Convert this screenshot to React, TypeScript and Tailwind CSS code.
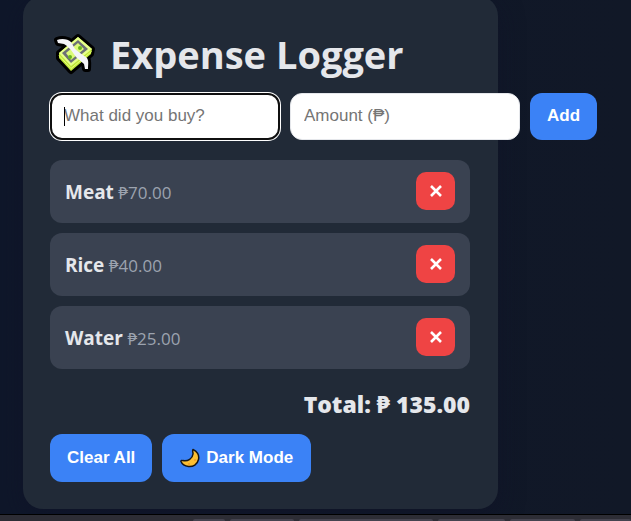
import { useState } from "react";

type Expense = { id: number; name: string; amount: number };

const initialExpenses: Expense[] = [
  { id: 1, name: "Meat", amount: 70 },
  { id: 2, name: "Rice", amount: 40 },
  { id: 3, name: "Water", amount: 25 },
];

function MoneyIcon() {
  const note = "M28 8 42 20 41 25 21 42 9 29 9 24Z";
  const wings =
    "M7 11C12 9 18 10 21 13L25 20 30 24 37 29C39 32 38 36 38 40L35 40 34 35 26 28 21 21 17 17 14 15 8 14Z";
  return (
    <svg aria-hidden="true" className="h-[50px] w-[50px] shrink-0" viewBox="0 0 50 50">
      <g fill="#000" stroke="#000" strokeWidth="6" strokeLinejoin="round">
        <path d={note} />
        <path d={wings} />
      </g>
      <path d={note} fill="#bfe83a" />
      <path d="M28 8 42 20 21 37 9 24Z" fill="#e6ff8a" />
      <path d="M9 26.5 21 39.5 41.5 22.5" fill="none" stroke="#e9ff7d" strokeWidth="1" />
      <path d="M28 11 38 20 21 34 12 24Z" fill="#6d7076" />
      <path d="M28 14 34 20 21 31 16 24Z" fill="#dcfa78" />
      <circle cx="30" cy="19" r="2" fill="#6ab51d" />
      <circle cx="20" cy="28" r="2" fill="#6ab51d" />
      <path d={wings} fill="#f4f4f7" />
    </svg>
  );
}

function MoonIcon() {
  return (
    <svg aria-hidden="true" className="h-5 w-5 shrink-0" viewBox="0 0 20 20">
      <path
        d="M13 1.5C17 3 19.5 7 18.5 11.5 17.5 16.5 13 19 8.5 18.5 5 18 2 16 1 13.5 .8 12.5 2 12.300 3 12.6 8 13.5 12.5 10.5 13 6 13.2 4.500 12 2.5 13 1.5Z"
        fill="#fcbf32"
        stroke="#161616"
        strokeWidth="1.5"
        strokeLinejoin="round"
      />
      <circle cx="9" cy="16" r="1" fill="#f09a28" />
      <circle cx="15" cy="12" r="1" fill="#f09a28" />
    </svg>
  );
}

const primaryButton =
  "shrink-0 rounded-xl bg-[#3b82f6] font-['Liberation_Sans',Arial,sans-serif] text-[17px] font-bold text-white";

export default function App() {
  const [expenses, setExpenses] = useState(initialExpenses);
  const [name, setName] = useState("");
  const [amount, setAmount] = useState("");
  const total = expenses.reduce((sum, e) => sum + e.amount, 0);

  const add = () => {
    const value = Number(amount);
    if (!name || !value) return;
    setExpenses([...expenses, { id: Date.now(), name, amount: value }]);
    setName("");
    setAmount("");
  };

  return (
    <div className="flex min-h-screen flex-col overflow-hidden bg-linear-to-r from-[#0f172a] to-[#111827] font-['Open_Sans','Noto_Sans',sans-serif] text-[#e5e7eb]">
      <main className="-mt-1 mr-6 ml-[23px] max-w-[475px] rounded-[20px] bg-[#212a37] pt-8 pr-7 pb-[27px] pl-[27px] shadow-[0_8px_24px_rgba(15,18,40,0.6)]">
        <h1 className="flex h-[52px] items-center gap-[10px] text-[38px] font-bold whitespace-nowrap">
          <MoneyIcon />
          Expense Logger
        </h1>

        <div className="mt-[13px] flex gap-[10px]">
          <div className="relative w-[230px] shrink-0">
            <input
              aria-label="What did you buy?"
              placeholder="What did you buy?"
              value={name}
              onChange={(e) => setName(e.target.value)}
              className="peer h-[47px] w-full rounded-xl border-2 border-[#101010] bg-white px-3 pb-[2px] font-['Liberation_Sans',Arial,sans-serif] text-[17px] text-black ring-1 ring-white outline-none placeholder:text-[#757575]"
            />
            <span className="pointer-events-none absolute top-[14px] left-[14px] h-[19px] w-px bg-black peer-focus:hidden" />
          </div>
          <input
            aria-label="Amount (₱)"
            placeholder="Amount (₱)"
            value={amount}
            onChange={(e) => setAmount(e.target.value)}
            className="h-[47px] w-[230px] shrink-0 rounded-xl border border-[#e5e7eb] bg-white px-[13px] pb-[2px] font-['Liberation_Sans',Arial,sans-serif] text-[17px] text-black placeholder:text-[#757575]"
          />
          <button onClick={add} className={`${primaryButton} h-[47px] px-[17px] pb-[2px]`}>
            Add
          </button>
        </div>

        <ul className="mt-5 flex flex-col gap-[10px]">
          {expenses.map((e) => (
            <li
              key={e.id}
              className="flex h-[63px] items-center justify-between rounded-xl bg-[#3a4251] px-[15px]"
            >
              <span className="pt-[2px] text-[17px]">
                <strong className="text-[19px] font-bold">{e.name}</strong>{" "}
                <span className="text-[#9ca3af]">₱{e.amount.toFixed(2)}</span>
              </span>
              <button
                aria-label={`Delete ${e.name}`}
                onClick={() => setExpenses(expenses.filter((x) => x.id !== e.id))}
                className="mb-px flex h-[38px] w-[39px] items-center justify-center rounded-[10px] bg-[#ef4444]"
              >
                <svg className="h-3 w-3" viewBox="0 0 12 12" aria-hidden="true">
                  <path d="M1 1 11 11M11 1 1 11" stroke="#fff" strokeWidth="2.6" />
                </svg>
              </button>
            </li>
          ))}
        </ul>

        <p className="mt-[19px] text-right text-[23px] leading-8 font-extrabold">
          Total: ₱ {total.toFixed(2)}
        </p>

        <div className="mt-[14px] flex gap-[10px]">
          <button onClick={() => setExpenses([])} className={`${primaryButton} h-12 px-[17px]`}>
            Clear All
          </button>
          <button className={`${primaryButton} flex h-12 items-center gap-[6px] px-[18px]`}>
            <MoonIcon />
            Dark Mode
          </button>
        </div>
      </main>

      <footer className="mt-[5px] flex h-[7px] items-end gap-[5px] border-t border-black bg-[#2d2d35] pl-[193px]">
        <span className="h-[2px] w-8 shrink-0 rounded-t-sm bg-[#44434f]" />
        <span className="h-[2px] w-16 shrink-0 rounded-t-sm bg-[#44434f]" />
        <span className="h-[2px] w-[134px] shrink-0 rounded-t-sm bg-[#44434f]" />
        <span className="h-[2px] w-[67px] shrink-0 rounded-t-sm bg-[#44434f]" />
        <span className="h-[2px] w-[65px] shrink-0 rounded-t-sm bg-[#44434f]" />
        <span className="h-[2px] grow rounded-t-sm bg-[#44434f]" />
      </footer>
    </div>
  );
}
